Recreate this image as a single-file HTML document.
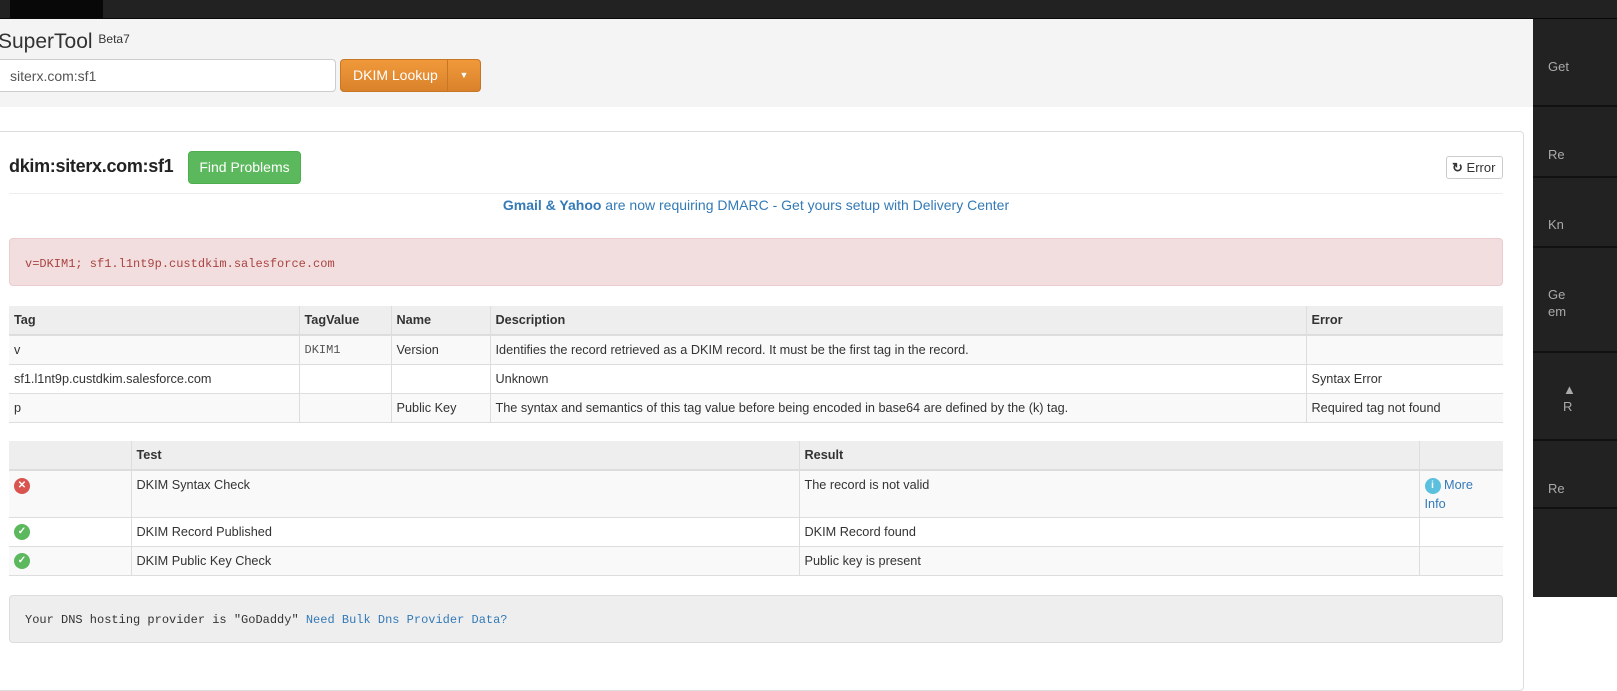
<!DOCTYPE html>
<html><head><meta charset="utf-8"><style>
*{box-sizing:border-box;margin:0;padding:0}
body{width:1617px;height:671px;overflow:hidden;background:#fff;font-family:"Liberation Sans",Arial,sans-serif;font-size:13px;color:#333;position:relative}
.top{position:absolute;left:0;top:0;width:1617px;height:19px;background:#222;border-bottom:1px solid #080808}
.logo{position:absolute;left:10px;top:0;width:93px;height:19px;background:#080808}
.hdr{position:absolute;left:0;top:19px;width:1533px;height:88px;background:#f4f4f4}
.st{position:absolute;left:-2px;top:30px;font-size:21px;color:#333}
.st sup{font-size:12px;vertical-align:top;position:relative;top:2px}
.inp{position:absolute;left:-4px;top:59px;width:340px;height:33px;background:#fff;border:1px solid #ccc;border-radius:4px;padding:8px 13px;font-size:14px;color:#555}
.btn{position:absolute;top:59px;height:33px;background:linear-gradient(#f0993b,#d9822b);border:1px solid #c67625;color:#fff;font-size:14px;line-height:31px}
.sb{position:absolute;left:1533px;top:19px;width:84px;height:578px;background:#222}
.sb div{position:absolute;left:0;width:84px;border-bottom:2px solid #111;color:#aaa;font-size:13px;padding-left:15px}
.panel{position:absolute;left:-5px;top:131px;width:1529px;height:560px;border:1px solid #ddd;border-radius:4px;background:#fff}
.title{position:absolute;left:9px;top:156px;font-size:18px;font-weight:bold;color:#222;letter-spacing:-0.3px}
.fp{position:absolute;left:188px;top:151px;width:113px;height:33px;background:#5cb85c;border:1px solid #4cae4c;border-radius:4px;color:#fff;font-size:14px;text-align:center;line-height:31px}
.err{position:absolute;left:1446px;top:156px;width:57px;height:23px;border:1px solid #ccc;border-radius:3px;font-size:13px;line-height:21px;padding-left:5px;color:#333}
.hr{position:absolute;left:9px;top:193px;width:1494px;border-top:1px solid #eee}
.gm{position:absolute;left:0;top:197px;width:1512px;text-align:center;color:#337ab7;font-size:14px}
.alert{position:absolute;left:9px;top:238px;width:1494px;height:48px;background:#f2dede;border:1px solid #ebccd1;border-radius:4px;font-family:"Liberation Mono",monospace;font-size:12px;color:#a94442;padding:18px 15px}
.well{position:absolute;left:9px;top:595px;width:1494px;height:48px;background:#eee;border:1px solid #ddd;border-radius:4px;font-family:"Liberation Mono",monospace;font-size:12px;color:#333;padding:17px 15px}
table{position:absolute;left:9px;border-collapse:collapse;font-size:12.7px;table-layout:fixed}
td,th{border:1px solid #ddd;padding:0 5px;text-align:left;vertical-align:top;height:29px;line-height:28px}
tr td:first-child,tr th:first-child{border-left:0}
tr td:last-child,tr th:last-child{border-right:0}
th{background:#eee;border-bottom:2px solid #ddd;border-top:0}
tr.o td{background:#f9f9f9}
.mono{font-family:"Liberation Mono",monospace;font-size:12px;color:#555}
.ic{display:inline-block;width:16px;height:16px;border-radius:50%;color:#fff;font-size:10px;line-height:16px;text-align:center;font-weight:bold;vertical-align:middle}
</style></head><body>
<div class="top"><div class="logo"></div></div>
<div class="hdr"></div>
<div class="st">SuperTool <sup>Beta7</sup></div>
<div class="inp">siterx.com:sf1</div>
<div class="btn" style="left:340px;width:108px;border-radius:4px 0 0 4px;padding-left:12px">DKIM Lookup</div>
<div class="btn" style="left:447px;width:34px;border-radius:0 4px 4px 0;text-align:center;font-size:9px">▼</div>
<div class="sb">
<div style="top:0;height:88px;padding-top:40px">Get</div>
<div style="top:88px;height:71px;padding-top:40px">Re</div>
<div style="top:159px;height:70px;padding-top:39px">Kn</div>
<div style="top:229px;height:105px;padding-top:38px;line-height:17px">Ge<br>em</div>
<div style="top:334px;height:88px;padding-top:28px;line-height:17px;padding-left:30px">▲<br>R</div>
<div style="top:422px;height:68px;padding-top:40px">Re</div>
<div style="top:490px;height:88px;border:0"></div>
</div>
<div class="panel"></div>
<div class="title">dkim:siterx.com:sf1</div>
<div class="fp">Find Problems</div>
<div class="err"><span style="font-weight:bold">↻</span> Error</div>
<div class="hr"></div>
<div class="gm"><b>Gmail &amp; Yahoo</b> are now requiring DMARC - Get yours setup with Delivery Center</div>
<div class="alert">v=DKIM1; sf1.l1nt9p.custdkim.salesforce.com</div>
<table style="top:306px;width:1494px">
<tr><th style="width:290px">Tag</th><th style="width:92px">TagValue</th><th style="width:99px">Name</th><th style="width:816px">Description</th><th>Error</th></tr>
<tr class="o"><td>v</td><td class="mono">DKIM1</td><td>Version</td><td>Identifies the record retrieved as a DKIM record. It must be the first tag in the record.</td><td></td></tr>
<tr><td>sf1.l1nt9p.custdkim.salesforce.com</td><td></td><td></td><td>Unknown</td><td>Syntax Error</td></tr>
<tr class="o"><td>p</td><td></td><td>Public Key</td><td>The syntax and semantics of this tag value before being encoded in base64 are defined by the (k) tag.</td><td>Required tag not found</td></tr>
</table>
<table style="top:441px;width:1494px">
<tr><th style="width:122px"></th><th style="width:668px">Test</th><th style="width:620px">Result</th><th style="width:84px"></th></tr>
<tr class="o"><td style="height:47px"><span class="ic" style="background:#d9534f">✕</span></td><td>DKIM Syntax Check</td><td>The record is not valid</td><td style="line-height:19px;padding-top:5px;color:#337ab7"><span class="ic" style="background:#5bc0de">i</span> More<br>Info</td></tr>
<tr><td><span class="ic" style="background:#5cb85c">✓</span></td><td>DKIM Record Published</td><td>DKIM Record found</td><td></td></tr>
<tr class="o"><td><span class="ic" style="background:#5cb85c">✓</span></td><td>DKIM Public Key Check</td><td>Public key is present</td><td></td></tr>
</table>
<div class="well">Your DNS hosting provider is "GoDaddy"  <span style="color:#337ab7">Need Bulk Dns Provider Data?</span></div>
</body></html>
